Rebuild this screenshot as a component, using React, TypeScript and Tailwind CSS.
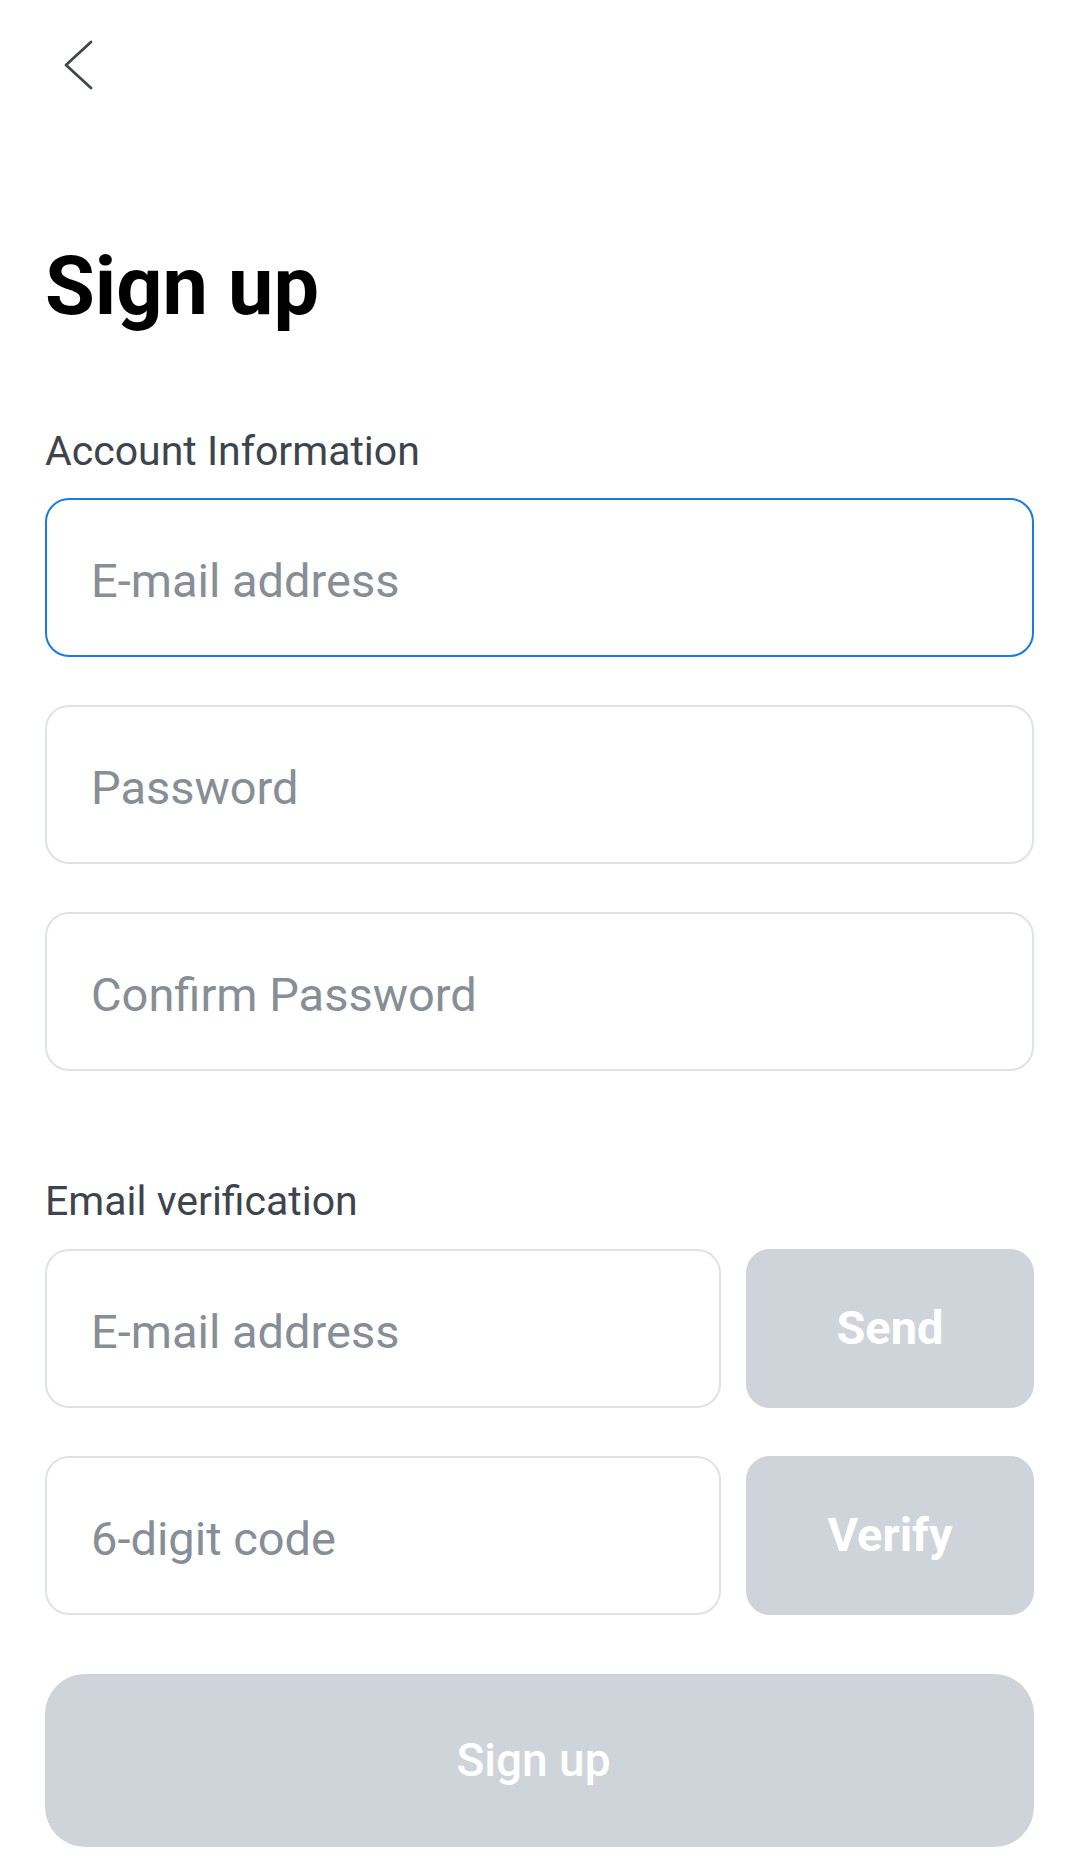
import React from "react";

function Field({ placeholder, active = false, className = "" }: { placeholder: string; active?: boolean; className?: string }) {
  return (
    <div
      className={`h-[159px] rounded-[24px] bg-white flex items-center pl-[44px] pt-[5px] ${
        active ? "border-[2.5px] border-[#1a7ae9]" : "border-[2.5px] border-[#dfe2e6]"
      } ${className}`}
    >
      <span className="text-[47px] leading-none text-[#878e96]">{placeholder}</span>
    </div>
  );
}

function SideButton({ label }: { label: string }) {
  return (
    <button className="flex-1 h-[159px] rounded-[24px] bg-[#cfd4db] flex items-center justify-center text-[47px] font-bold text-white">
      {label}
    </button>
  );
}

export default function App() {
  return (
    <div
      className="w-full min-h-screen bg-white px-[45px]"
      style={{ fontFamily: "Roboto, 'Noto Sans', Arial, sans-serif" }}
    >
      <div className="pt-[39px] pl-[18px]">
        <svg width="30" height="52" viewBox="0 0 30 52" fill="none">
          <path d="M28 3 L3 26 L28 49" stroke="#3f4650" strokeWidth="2.8" strokeLinecap="round" strokeLinejoin="round" />
        </svg>
      </div>

      <h1 className="mt-[146px] h-[100px] leading-[100px] text-[81px] font-bold text-black">Sign up</h1>

      <div className="mt-[89px] h-[50px] leading-[50px] text-[41px] text-[#3d444d]">Account Information</div>

      <Field className="mt-[22px]" placeholder="E-mail address" active />
      <Field className="mt-[48px]" placeholder="Password" />
      <Field className="mt-[48px]" placeholder="Confirm Password" />

      <div className="mt-[105px] h-[50px] leading-[50px] text-[41px] text-[#3d444d]">Email verification</div>

      <div className="mt-[23px] flex gap-[25px]">
        <Field className="w-[676px]" placeholder="E-mail address" />
        <SideButton label="Send" />
      </div>
      <div className="mt-[48px] flex gap-[25px]">
        <Field className="w-[676px]" placeholder="6-digit code" />
        <SideButton label="Verify" />
      </div>

      <button className="mt-[59px] w-full h-[173px] rounded-[40px] bg-[#cfd4db] flex items-center justify-center pr-[12px] text-[46px] font-medium text-white">
        Sign up
      </button>
      <div className="h-[12px]" />
    </div>
  );
}
